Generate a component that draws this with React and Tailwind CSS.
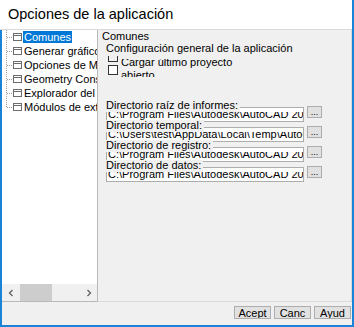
const treeItems = [
  "Comunes",
  "Generar gráficos",
  "Opciones de Modelado",
  "Geometry Constraints",
  "Explorador del proyecto",
  "Módulos de extensión",
];

const dirRows = [
  ["Directorio raíz de informes:", "C:\\Program Files\\Autodesk\\AutoCAD 2019\\Reports"],
  ["Directorio temporal:", "C:\\Users\\test\\AppData\\Local\\Temp\\AutoCAD"],
  ["Directorio de registro:", "C:\\Program Files\\Autodesk\\AutoCAD 2019\\Logs"],
  ["Directorio de datos:", "C:\\Program Files\\Autodesk\\AutoCAD 2019\\Data"],
];

function TreeConnector({ last }) {
  return (
    <svg width="11" height="14" className="shrink-0">
      <line x1="4.5" y1="0" x2="4.5" y2={last ? 7 : 14} stroke="#a0a0a0" strokeDasharray="1 1" />
      <line x1="5" y1="7.5" x2="11" y2="7.5" stroke="#a0a0a0" strokeDasharray="1 1" />
    </svg>
  );
}

function NodeIcon() {
  return (
    <svg width="9" height="8" className="shrink-0">
      <rect x="0.5" y="0.5" width="8" height="7" fill="#fff" stroke="#6d6d6d" />
      <line x1="1" y1="2.5" x2="8" y2="2.5" stroke="#6d6d6d" />
    </svg>
  );
}

function TreeItem({ label, selected, last }) {
  return (
    <div className="flex h-[14px] items-center whitespace-nowrap">
      <TreeConnector last={last} />
      <NodeIcon />
      <span
        className={
          selected
            ? "ml-[1px] bg-[#0078d7] px-[1px] leading-[12px] text-white"
            : "ml-[2px] leading-[12px]"
        }
      >
        {label}
      </span>
    </div>
  );
}

function Chevron({ dir }) {
  return (
    <svg width="6" height="8" viewBox="0 0 6 8">
      <path
        d={dir === "left" ? "M4.5 1 L1.5 4 L4.5 7" : "M1.5 1 L4.5 4 L1.5 7"}
        fill="none"
        stroke="#606060"
        strokeWidth="1.3"
      />
    </svg>
  );
}

function DirRow({ label, value }) {
  return (
    <div className="h-[20px] w-[216px]">
      <div className="relative z-10 h-[12px] w-fit bg-[#f0f0f0] pr-[2px] leading-[11px]">
        {label}
      </div>
      <div className="-mt-[5px] flex items-start">
        <div className="h-[15px] w-[198px] border border-[#adadad] bg-white pt-[4px] pl-[1px]">
          <div className="h-[8px] overflow-hidden">
            <div className="-mt-[3px] whitespace-nowrap leading-[11px]">{value}</div>
          </div>
        </div>
        <div className="-mt-[1px] ml-[3px] flex h-[12px] w-[15px] items-end justify-center border border-[#adadad] bg-[#e1e1e1] text-[9px] leading-[9px]">
          ...
        </div>
      </div>
    </div>
  );
}

function DialogButton({ children }) {
  return (
    <div className="flex h-[13px] w-[37px] items-center justify-center overflow-hidden border border-[#adadad] bg-[#e1e1e1] leading-[12px]">
      {children}
    </div>
  );
}

export default function App() {
  return (
    <div className="flex h-[327px] w-[354px] flex-col overflow-hidden border-r-2 border-b-2 border-[#1883d7] bg-[#f0f0f0] font-['Liberation_Sans',Arial,sans-serif] text-[11px] text-black">
      <div className="h-[30px] shrink-0 border-b border-[#dadada] bg-white pl-[8px] text-[14.5px] leading-[28px]">
        Opciones de la aplicación
      </div>

      <div className="flex h-[272px] shrink-0 border-l-2 border-[#1883d7]">
        <div className="flex w-[96px] flex-col overflow-hidden border-r border-b border-[#b9b9b9] bg-white">
          <div className="flex-1">
            {treeItems.map((item, i) => (
              <TreeItem
                key={item}
                label={item}
                selected={i === 0}
                last={i === treeItems.length - 1}
              />
            ))}
          </div>
          <div className="flex h-[17px] bg-[#f0f0f0]">
            <div className="flex w-[17px] items-center justify-center">
              <Chevron dir="left" />
            </div>
            <div className="ml-[1px] w-[32px] bg-[#cdcdcd]" />
            <div className="flex-1" />
            <div className="flex w-[17px] items-center justify-center">
              <Chevron dir="right" />
            </div>
          </div>
        </div>

        <div className="flex w-[254px] flex-col border-r border-b border-[#dadada]">
          <div className="pl-[4px] leading-[12px]">Comunes</div>
          <div className="pl-[8px] leading-[12px]">Configuración general de la aplicación</div>

          <div className="flex h-[24px] pl-[10px]">
            <div className="flex w-[10px] flex-col">
              <div className="mt-[2px] h-[6px] overflow-hidden">
                <div className="-mt-[4px] h-[10px] w-[10px] border border-[#333]" />
              </div>
              <div className="mt-[3px] h-[10px] w-[10px] border border-[#333] bg-white" />
            </div>
            <div className="ml-[3px] w-[125px] pt-[5px]">
              <div className="h-[18px] overflow-hidden">
                <div className="-mt-[3px] leading-[13px]">Cargar último proyecto abierto</div>
              </div>
            </div>
          </div>

          <div className="mt-[22px] pl-[8px]">
            {dirRows.map(([label, value]) => (
              <DirRow key={label} label={label} value={value} />
            ))}
          </div>
        </div>
      </div>

      <div className="flex flex-1 justify-end gap-[3px] border-l-2 border-[#1883d7] pt-[4px] pr-[1px]">
        <DialogButton>Acept</DialogButton>
        <DialogButton>Canc</DialogButton>
        <DialogButton>Ayud</DialogButton>
      </div>
    </div>
  );
}
